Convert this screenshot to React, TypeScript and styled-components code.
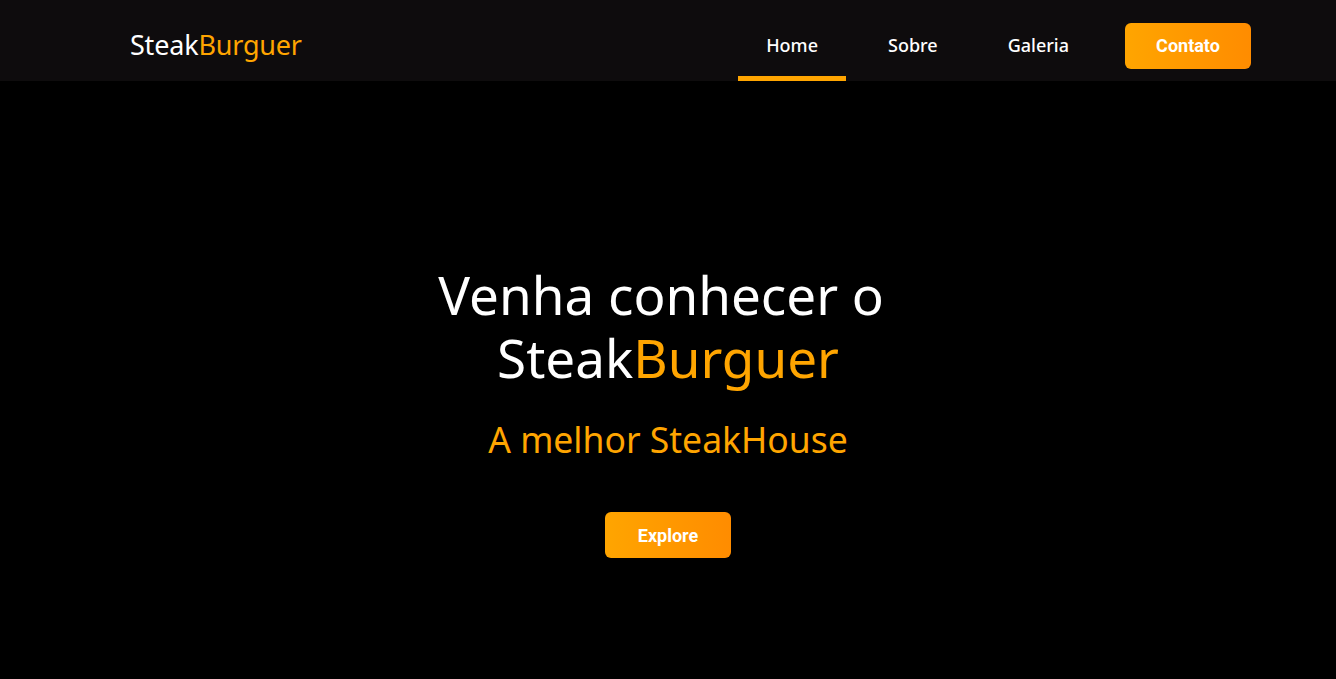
import React from "react";
import styled, { createGlobalStyle } from "styled-components";

const Global = createGlobalStyle`
  html, body { margin: 0; padding: 0; background: #000; }
  body { font-family: "Noto Sans", "Open Sans", sans-serif; color: #fff; }
  * { box-sizing: border-box; }
`;

const ORANGE = "#ffa500";

const Page = styled.div`
  width: 100%;
  min-height: 679px;
  background: #000;
  display: flex;
  flex-direction: column;
`;

const Header = styled.header`
  height: 81px;
  background: #0e0c0d;
  display: flex;
  align-items: center;
  justify-content: space-between;
  padding: 10px 85px 0 130px;
`;

const Logo = styled.div`
  font-size: 27px;
  font-weight: 400;
  letter-spacing: -0.2px;
  color: #fff;
  margin-top: -2px;
`;

const Accent = styled.span`
  color: ${ORANGE};
`;

const Nav = styled.nav`
  display: flex;
  align-items: stretch;
  height: 100%;
  gap: 14px;
`;

const NavLink = styled.a<{ $active?: boolean }>`
  display: flex;
  align-items: center;
  padding: 4px 28px 0;
  font-size: 18px;
  font-weight: 500;
  color: #fff;
  text-decoration: none;
  border-bottom: 5px solid ${(p) => (p.$active ? ORANGE : "transparent")};
  cursor: pointer;
`;

const NavItem = styled.div`
  display: flex;
  align-items: center;
  margin-left: 14px;
`;

const GradientButton = styled.button`
  width: 126px;
  height: 46px;
  border: none;
  border-radius: 6px;
  background: linear-gradient(90deg, #ffa500 0%, #ff8c00 100%);
  color: #fff;
  font-family: Roboto, "Liberation Sans", sans-serif;
  font-weight: 700;
  font-size: 18px;
  cursor: pointer;
`;

const Hero = styled.main`
  flex: 1;
  display: flex;
  flex-direction: column;
  align-items: center;
  padding-top: 182px;
  text-align: center;
`;

const Title = styled.h1`
  margin: 0;
  font-size: 53px;
  font-weight: 400;
  line-height: 63px;
  color: #fff;
`;

const Subtitle = styled.h2`
  margin: 28px 0 0;
  font-size: 35.5px;
  font-weight: 400;
  line-height: 44px;
  color: ${ORANGE};
`;

const ExploreWrap = styled.div`
  margin-top: 51px;
`;

export default function App() {
  return (
    <Page>
      <Global />
      <Header>
        <Logo>
          Steak<Accent>Burguer</Accent>
        </Logo>
        <Nav>
          <NavLink $active>Home</NavLink>
          <NavLink>Sobre</NavLink>
          <NavLink>Galeria</NavLink>
          <NavItem>
            <GradientButton>Contato</GradientButton>
          </NavItem>
        </Nav>
      </Header>
      <Hero>
        <Title>
          Venha conhecer o{"\u00a0"}
          <br />
          Steak<Accent>Burguer</Accent>
        </Title>
        <Subtitle>A melhor SteakHouse</Subtitle>
        <ExploreWrap>
          <GradientButton>Explore</GradientButton>
        </ExploreWrap>
      </Hero>
    </Page>
  );
}
